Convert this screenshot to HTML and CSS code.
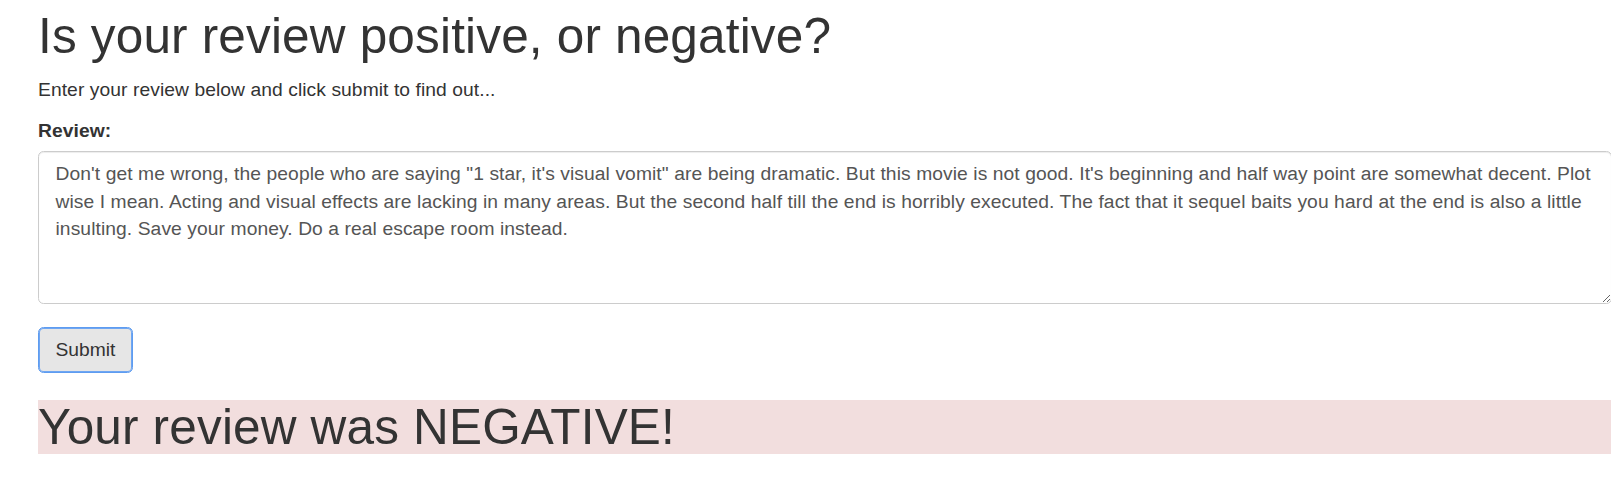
FILE: index.html
```html
<!DOCTYPE html>
<html lang="en">
<head>
<meta charset="utf-8">
<title>Review sentiment</title>
<link rel="stylesheet" href="styles.css">
</head>
<body>
<div class="container">
  <h1 class="title">Is your review positive, or negative?</h1>
  <p class="intro">Enter your review below and click submit to find out...</p>
  <form class="review-form">
    <div class="form-group">
      <label class="form-label" for="review">Review:</label>
      <textarea id="review" class="form-control">Don't get me wrong, the people who are saying "1 star, it's visual vomit" are being dramatic. But this movie is not good. It's beginning and half way point are somewhat decent. Plot wise I mean. Acting and visual effects are lacking in many areas. But the second half till the end is horribly executed. The fact that it sequel baits you hard at the end is also a little insulting. Save your money. Do a real escape room instead.</textarea>
    </div>
    <button type="button" class="btn">Submit</button>
  </form>
  <h1 class="result">Your review was NEGATIVE!</h1>
</div>
</body>
</html>
```

FILE: styles.css
```css
html {
  overflow: hidden;
}

body {
  margin: 0;
  font-family: "Liberation Sans", Arial, Helvetica, sans-serif;
  font-size: 19.25px;
  line-height: 27.5px;
  letter-spacing: 0.07px;
  color: #333;
  background: #fff;
}

.container {
  padding-left: 38px;
  margin-right: -1px;
}

.title {
  margin: 9px 0 13px;
  font-size: 49.5px;
  font-weight: normal;
  line-height: 1.1;
  letter-spacing: 0.17px;
}

.intro {
  margin: 0 0 13px;
}

.review-form {
  margin: 0;
}

.form-group {
  margin-bottom: 23px;
}

.form-label {
  display: block;
  font-weight: bold;
  margin-bottom: 6.5px;
}

.form-control {
  display: block;
  box-sizing: border-box;
  width: 100%;
  height: 153px;
  margin: 0;
  padding: 8.25px 16.5px;
  font: inherit;
  letter-spacing: 0.08px;
  color: #555;
  background: #fff;
  border: 1px solid #ccc;
  border-radius: 5.5px;
  box-shadow: inset 0 1px 1px rgba(0, 0, 0, 0.075);
}

.btn {
  display: inline-block;
  margin: 0;
  padding: 8.25px 16.5px;
  font: inherit;
  line-height: 27.5px;
  color: #333;
  background: #e6e6e6;
  border: 1px solid #5e9cf0;
  border-radius: 5.5px;
  box-shadow: inset 0 0 0 1px #6fa6f2;
  cursor: pointer;
}

.result {
  margin: 27.5px 0 13.75px;
  font-size: 49.5px;
  font-weight: normal;
  line-height: 1.08;
  letter-spacing: 0.17px;
  background: #f2dede;
}
```
